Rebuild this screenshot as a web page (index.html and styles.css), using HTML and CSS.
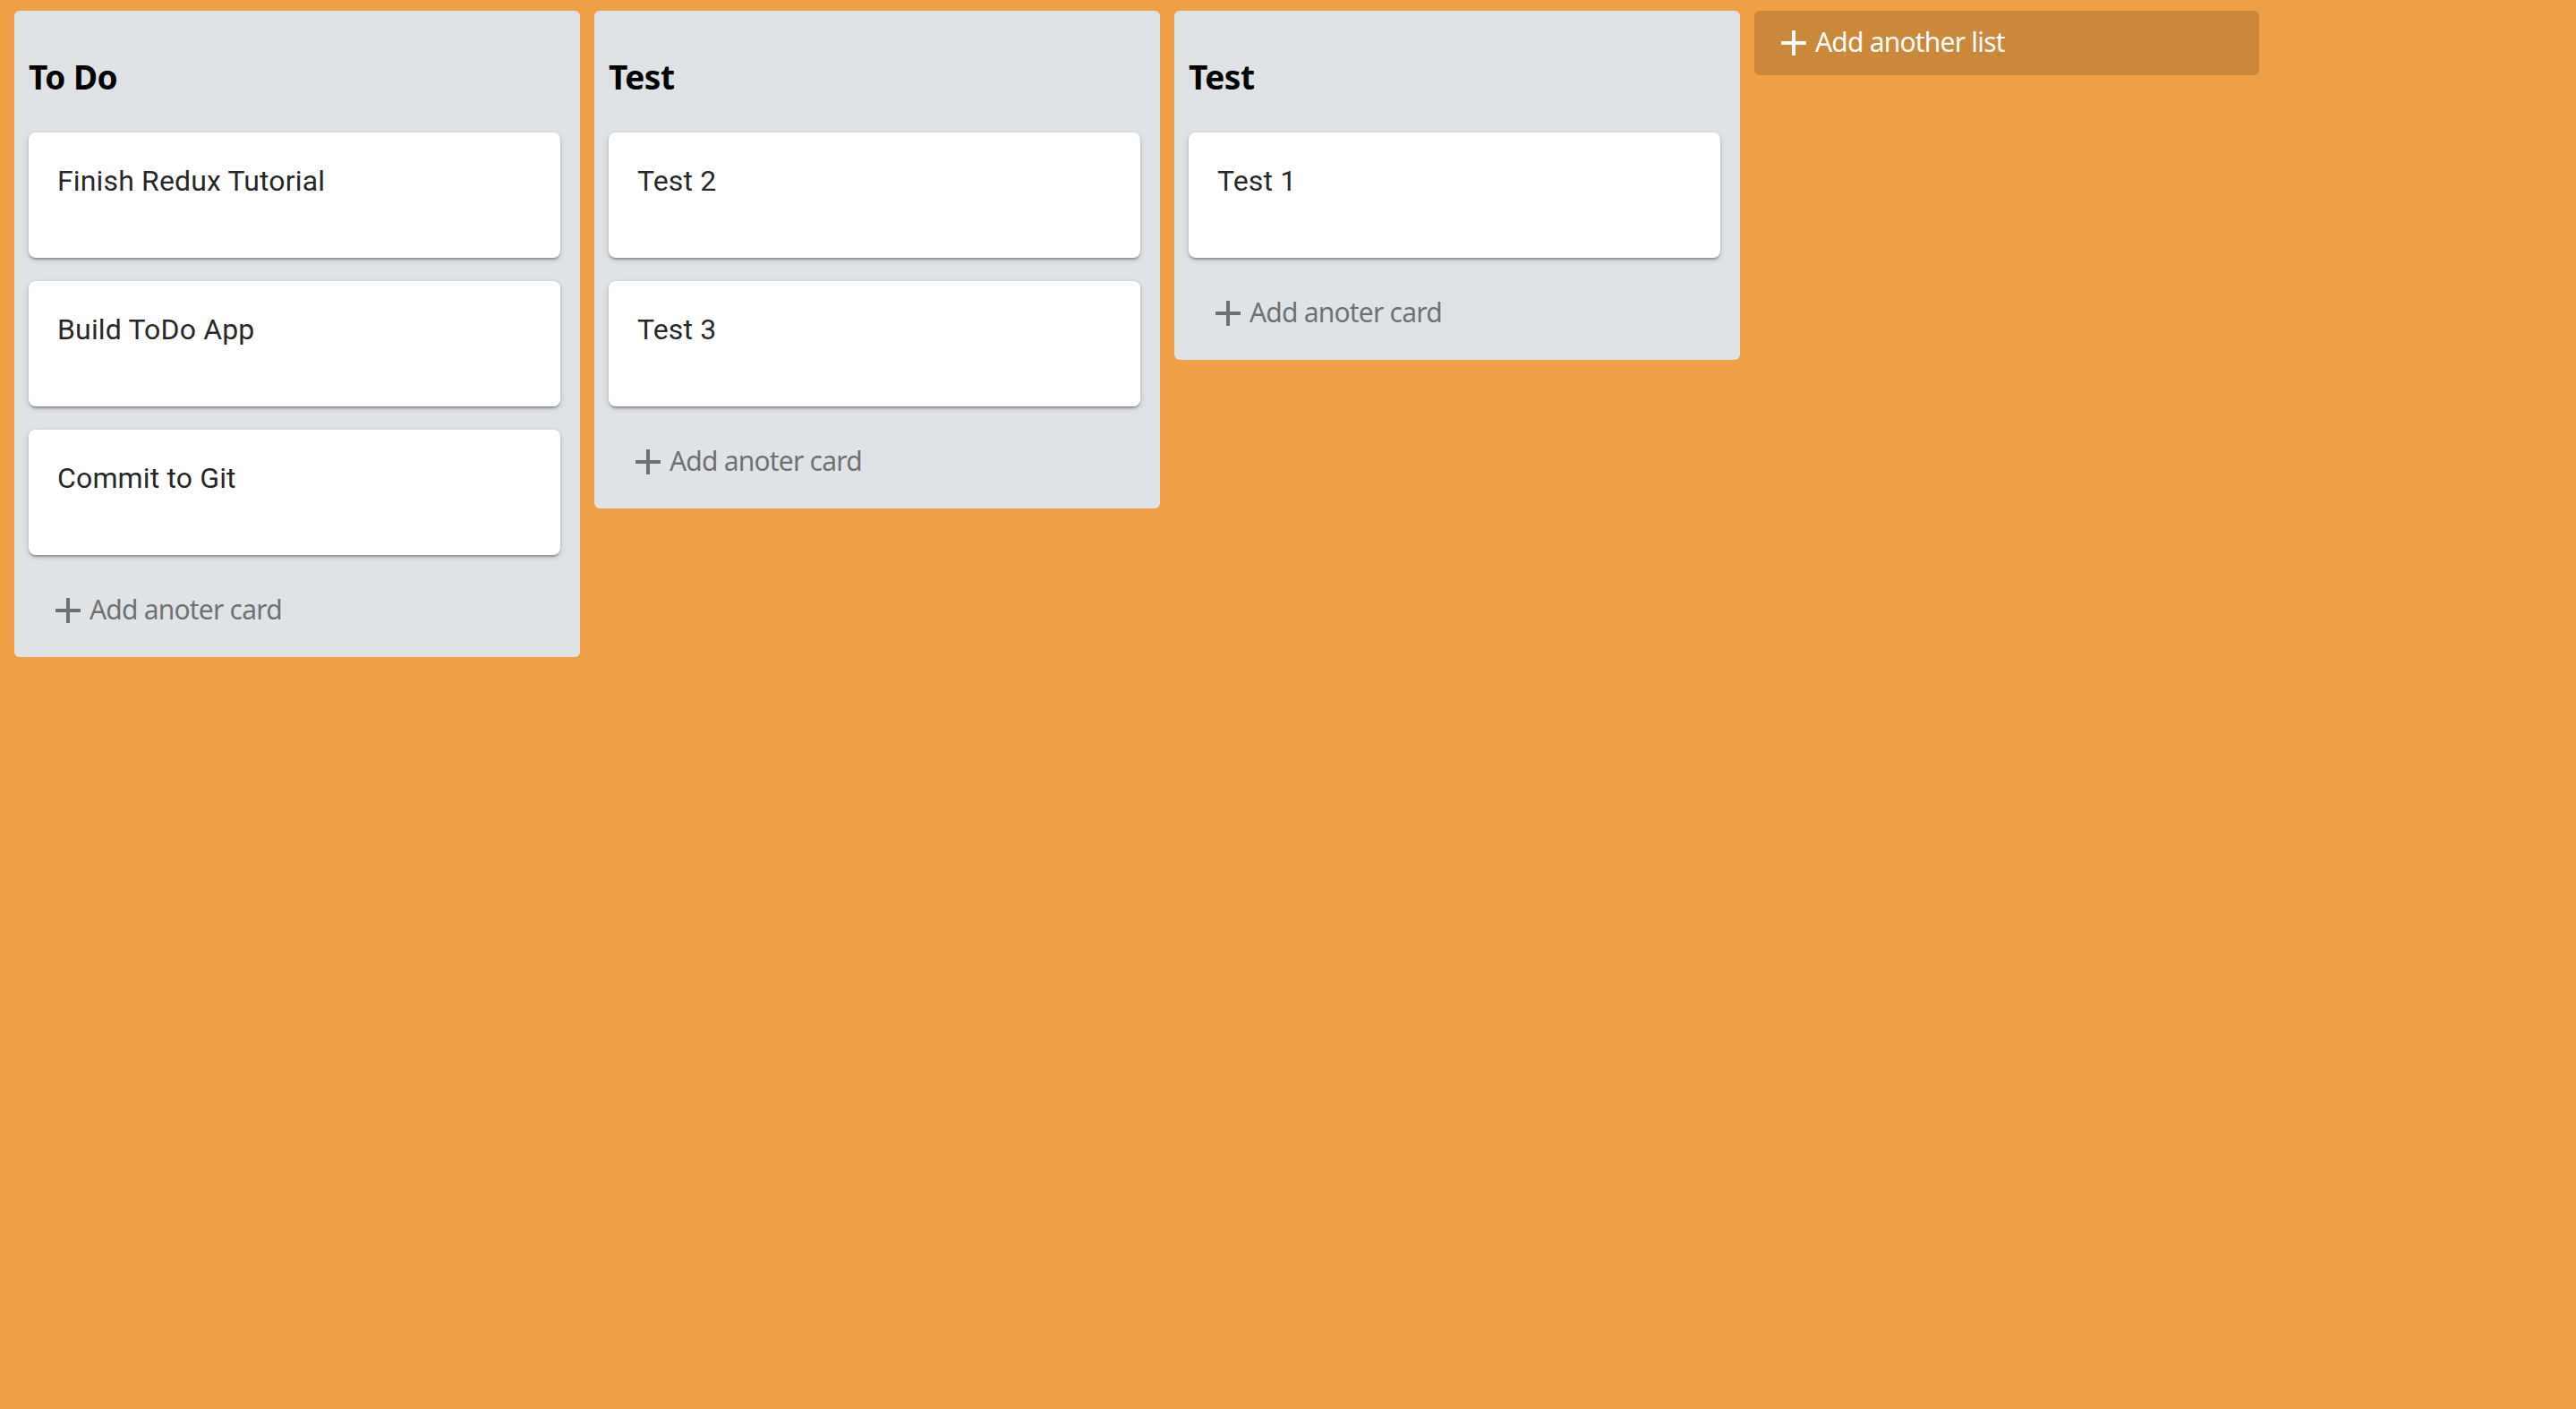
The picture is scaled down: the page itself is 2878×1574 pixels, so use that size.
FILE: index.html
```html
<!DOCTYPE html>
<html lang="en">
<head>
<meta charset="utf-8">
<title>Trello Clone</title>
<link rel="stylesheet" href="styles.css">
</head>
<body>
<div class="board">
  <div class="list">
    <h3 class="list-title">To Do</h3>
    <div class="card"><p class="card-text">Finish Redux Tutorial</p></div>
    <div class="card"><p class="card-text">Build ToDo App</p></div>
    <div class="card"><p class="card-text">Commit to Git</p></div>
    <div class="add-btn add-card">
      <svg class="plus" viewBox="0 0 48 48"><path d="M38 26H26v12h-4V26H10v-4h12V10h4v12h12v4z"/></svg>
      <span class="add-text">Add anoter card</span>
    </div>
  </div>
  <div class="list">
    <h3 class="list-title">Test</h3>
    <div class="card"><p class="card-text">Test 2</p></div>
    <div class="card"><p class="card-text">Test 3</p></div>
    <div class="add-btn add-card">
      <svg class="plus" viewBox="0 0 48 48"><path d="M38 26H26v12h-4V26H10v-4h12V10h4v12h12v4z"/></svg>
      <span class="add-text">Add anoter card</span>
    </div>
  </div>
  <div class="list">
    <h3 class="list-title">Test</h3>
    <div class="card"><p class="card-text">Test 1</p></div>
    <div class="add-btn add-card">
      <svg class="plus" viewBox="0 0 48 48"><path d="M38 26H26v12h-4V26H10v-4h12V10h4v12h12v4z"/></svg>
      <span class="add-text">Add anoter card</span>
    </div>
  </div>
  <div class="add-btn add-list">
    <svg class="plus" viewBox="0 0 48 48"><path d="M38 26H26v12h-4V26H10v-4h12V10h4v12h12v4z"/></svg>
    <span class="add-text">Add another list</span>
  </div>
</div>
</body>
</html>
```
FILE: styles.css
```css
html, body {
  margin: 0;
  padding: 0;
  background: #ef9f45;
  min-height: 100%;
}

body {
  font-family: "Noto Sans", "Open Sans", sans-serif;
}

.board {
  display: flex;
  align-items: flex-start;
  gap: 16px;
  padding: 12px 16px;
}

.list {
  width: 600px;
  padding: 16px;
  background: #dfe3e6;
  border-radius: 6px;
  display: flex;
  flex-direction: column;
}

.list-title {
  margin: 36px 0 40px;
  font-family: "Noto Sans", sans-serif;
  font-weight: 700;
  font-size: 37px;
  line-height: 44px;
  color: #000;
  letter-spacing: -0.5px;
}

.card {
  width: 594px;
  box-sizing: border-box;
  height: 140px;
  margin-bottom: 26px;
  padding: 32px 32px 0;
  background: #fff;
  border-radius: 8px;
  box-shadow: 0 2px 6px 0 rgba(0, 0, 0, 0.2), 0 2px 2px 0 rgba(0, 0, 0, 0.14), 0 4px 2px -2px rgba(0, 0, 0, 0.12);
}

.card-text {
  margin: 0;
  font-family: Roboto, sans-serif;
  font-size: 32px;
  line-height: 44px;
  letter-spacing: 0.15px;
  color: rgba(0, 0, 0, 0.87);
}

.add-btn {
  display: flex;
  align-items: center;
  height: 72px;
  padding-left: 20px;
  border-radius: 6px;
  cursor: pointer;
}

.plus {
  width: 48px;
  height: 48px;
  flex: none;
  fill: currentColor;
}

.add-text {
  font-size: 30px;
  letter-spacing: -0.8px;
  line-height: 1;
  padding-bottom: 3px;
}

.add-card {
  color: #000;
  opacity: 0.5;
}

.add-list {
  width: 544px;
  background: rgba(0, 0, 0, 0.15);
  color: #fff;
}
```
